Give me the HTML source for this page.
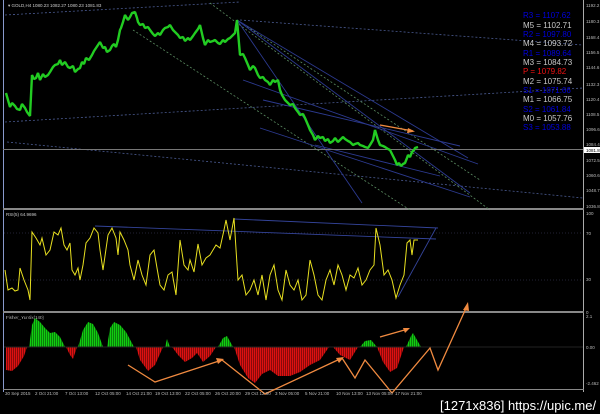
<!DOCTYPE html>
<html><head><meta charset="utf-8"><style>
html,body{margin:0;padding:0;background:#000;width:600px;height:414px;overflow:hidden}
svg{display:block}
text{font-family:"Liberation Sans",sans-serif}
</style></head><body>
<svg width="600" height="414" viewBox="0 0 600 414" xmlns="http://www.w3.org/2000/svg">
<defs>
<pattern id="st" width="2" height="10" patternUnits="userSpaceOnUse"><rect x="1.3" y="0" width="0.7" height="10" fill="#000" fill-opacity="0.55"/></pattern>
</defs>
<rect width="600" height="414" fill="#000"/>
<line x1="3.5" y1="0" x2="3.5" y2="392" stroke="#8899cc" stroke-width="1"/>
<line x1="583.5" y1="0" x2="583.5" y2="392" stroke="#aaa" stroke-width="1"/>
<rect x="3" y="208" width="581" height="2" fill="#888"/>
<rect x="3" y="311" width="581" height="2" fill="#888"/>
<line x1="3" y1="389.5" x2="584" y2="389.5" stroke="#888"/>
<text x="8" y="7" font-size="4.5" fill="#ccc">▾ GOLD,H4  1080.23 1082.27 1080.23 1081.83</text>
<g stroke-dasharray="2,2" stroke-width="0.8" fill="none">
<line x1="5" y1="15" x2="240" y2="2" stroke="#4a5a90"/>
<line x1="240" y1="20" x2="583" y2="45" stroke="#4a5a90"/>
<line x1="5" y1="122" x2="583" y2="88" stroke="#4a5a90"/>
<line x1="7" y1="142" x2="583" y2="198" stroke="#4a5a90"/>
<line x1="133" y1="30" x2="410" y2="210" stroke="#5a8a60"/>
<line x1="210" y1="3" x2="490" y2="210" stroke="#5a8a60"/>
<line x1="237" y1="20" x2="480" y2="180" stroke="#5a8a60"/>
</g>
<g stroke="#2c3a90" stroke-width="0.9" fill="none">
<line x1="237" y1="20" x2="468" y2="158"/>
<line x1="237" y1="20" x2="362" y2="203"/>
<line x1="243" y1="80" x2="478" y2="164"/>
<line x1="263" y1="100" x2="460" y2="146"/>
<line x1="260" y1="128" x2="470" y2="197"/>
<line x1="237" y1="20" x2="470" y2="193"/>
<line x1="315" y1="145" x2="440" y2="176"/>
</g>
<line x1="3" y1="149.5" x2="583" y2="149.5" stroke="#777"/>
<polyline fill="none" stroke="#22cc22" stroke-width="2.4" stroke-linejoin="bevel" points="6,93 8,100 10,107 12,103 15,106 17,109 20,110 22,104 25,108 27,112 30,116 32,75 34,79 36,78 38,73 40,80 43,74 45,77 48,75 50,72 53,67 55,65 58,64 60,60 62,65 65,62 68,67 70,68 73,66 75,72 78,69 80,68 82,62 84,64 86,58 89,60 92,55 94,51 96,48 98,45 100,42 103,48 105,47 107,52 110,50 112,46 114,44 116,47 118,40 120,30 121,28 123,22 125,15 128,20 130,17 132,13 135,12 137,18 138,22 140,25 143,24 145,28 148,27 150,30 153,34 155,36 158,33 160,35 163,30 165,28 168,27 170,25 173,30 175,32 178,35 180,38 183,37 185,41 188,38 190,40 193,36 195,33 198,29 200,25 203,38 205,45 208,40 210,42 213,41 215,40 218,43 220,44 223,40 225,42 228,39 230,38 233,35 235,33 237,20 240,55 243,54 245,58 248,65 250,70 253,66 255,68 258,75 260,78 263,77 265,80 268,82 270,85 273,80 275,82 278,80 280,90 282,95 285,100 288,103 290,105 293,104 295,108 298,112 300,115 303,114 305,118 308,125 310,130 313,135 315,140 318,136 320,138 323,137 325,141 328,139 330,143 333,141 335,138 338,142 340,140 343,137 345,139 348,141 350,142 353,145 355,144 358,143 360,145 363,146 365,147 368,148 370,145 373,140 375,130 378,140 380,145 383,146 385,147 388,149 390,150 393,156 395,160 397,165 399,163 401,166 403,164 405,163 407,158 408,155 410,157 412,152 414,150 415,148 418,147"/>
<line x1="380" y1="125" x2="413" y2="131" stroke="#f08a40" stroke-width="1.3"/>
<polygon points="415,131.5 408,128 407,133" fill="#f08a40"/>
<g font-size="8" font-family="Liberation Sans">
<text x="523" y="18" fill="#0000dd">R3 = 1107.62</text>
<text x="523" y="28" fill="#c8c8c8">M5 = 1102.71</text>
<text x="523" y="37" fill="#0000dd">R2 = 1097.80</text>
<text x="523" y="46" fill="#c8c8c8">M4 = 1093.72</text>
<text x="523" y="56" fill="#0000dd">R1 = 1089.64</text>
<text x="523" y="65" fill="#c8c8c8">M3 = 1084.73</text>
<text x="523" y="74" fill="#ee1111">P  = 1079.82</text>
<text x="523" y="84" fill="#c8c8c8">M2 = 1075.74</text>
<text x="523" y="93" fill="#0000dd">S1 = 1071.66</text>
<text x="523" y="102" fill="#c8c8c8">M1 = 1066.75</text>
<text x="523" y="112" fill="#0000dd">S2 = 1061.84</text>
<text x="523" y="121" fill="#c8c8c8">M0 = 1057.76</text>
<text x="523" y="130" fill="#0000dd">S3 = 1053.88</text>
</g>
<g font-size="4.5" fill="#bbb">
<text x="586" y="7">1192.2</text><text x="586" y="23">1180.3</text><text x="586" y="39">1168.4</text>
<text x="586" y="54">1156.5</text><text x="586" y="69">1144.6</text><text x="586" y="86">1132.3</text>
<text x="586" y="101">1120.4</text><text x="586" y="116">1108.5</text><text x="586" y="131">1096.6</text>
<text x="586" y="146">1084.4</text><text x="586" y="162">1072.5</text><text x="586" y="177">1060.6</text>
<text x="586" y="192">1048.7</text><text x="586" y="208">1036.8</text>
<text x="586" y="314">0</text><text x="586" y="318">2.1</text><text x="586" y="349">0.00</text><text x="586" y="385">-2.462</text>
<text x="586" y="215">100</text><text x="586" y="235">70</text><text x="586" y="281">30</text>
</g>
<rect x="584" y="147" width="16" height="6" fill="#fff"/>
<text x="586" y="152" font-size="4.5" fill="#000">1081.8</text>
<text x="6" y="216" font-size="4.5" fill="#ccc">RSI(5) 64.9696</text>
<line x1="4" y1="233" x2="583" y2="233" stroke="#223" stroke-dasharray="1,2"/>
<line x1="4" y1="280" x2="583" y2="280" stroke="#223" stroke-dasharray="1,2"/>
<g stroke="#34449a" stroke-width="0.9">
<line x1="95" y1="226" x2="436" y2="239"/>
<line x1="234" y1="219" x2="438" y2="228"/>
<line x1="398" y1="297" x2="436" y2="228"/>
</g>
<polyline fill="none" stroke="#e8e020" stroke-width="1" points="5,270 8,290 12,288 15,291 18,290 20,268 24,280 28,290 30,300 32,232 36,238 40,245 42,238 46,255 50,250 54,232 58,235 61,228 64,245 67,250 70,243 72,270 75,275 78,268 80,280 83,265 86,243 90,238 94,228 98,233 100,250 103,270 108,235 112,228 116,238 118,255 120,232 124,240 128,250 130,265 134,280 138,260 142,275 146,285 150,255 154,250 157,268 160,285 164,290 168,275 172,272 176,295 180,240 184,265 188,270 190,260 194,272 198,244 202,265 206,258 210,255 213,250 216,245 220,248 224,230 226,220 230,240 234,218 238,280 242,275 246,295 250,290 254,280 258,295 262,275 266,300 270,275 274,265 278,290 282,300 286,270 290,285 294,290 298,280 302,300 306,295 310,260 314,275 318,295 322,300 326,280 330,270 334,285 338,265 342,275 346,290 350,275 354,278 358,268 362,285 366,280 370,270 374,265 376,228 380,245 384,275 388,270 392,280 396,298 400,285 404,275 407,243 410,240 412,255 414,240 418,240"/>
<text x="6" y="319" font-size="4.5" fill="#ccc">Fisher_Yur4ik(140)</text>
<g stroke="none">
<path d="M29,347 L32,325 L35,318 L40,322 L45,328 L50,333 L55,332 L60,337 L65,347 Z" fill="#11cc11"/>
<path d="M78,347 L83,330 L88,322 L93,324 L98,333 L103,347 Z" fill="#11cc11"/>
<path d="M107,347 L110,328 L114,322 L120,325 L126,332 L134,347 Z" fill="#11cc11"/>
<path d="M165,347 L167,339 L170,347 Z" fill="#11cc11"/>
<path d="M218,347 L223,338 L227,336 L233,347 Z" fill="#11cc11"/>
<path d="M360,347 L365,341 L371,340 L377,347 Z" fill="#11cc11"/>
<path d="M406,347 L411,336 L413,333 L421,347 Z" fill="#11cc11"/>
<path d="M6,347 L6,370 L12,371 L18,366 L24,356 L27,347 Z" fill="#dd1111"/>
<path d="M66,347 L70,355 L73,359 L77,347 Z" fill="#dd1111"/>
<path d="M136,347 L140,360 L148,371 L155,365 L163,347 Z" fill="#dd1111"/>
<path d="M172,347 L178,355 L185,362 L192,358 L197,353 L203,362 L210,356 L216,347 Z" fill="#dd1111"/>
<path d="M234,347 L240,365 L248,378 L255,383 L262,374 L270,370 L278,376 L290,376 L300,372 L310,365 L320,360 L329,347 Z" fill="#dd1111"/>
<path d="M333,347 L340,355 L350,360 L358,347 Z" fill="#dd1111"/>
<path d="M377,347 L383,362 L390,372 L397,368 L404,347 Z" fill="#dd1111"/>
<rect x="4" y="314" width="420" height="75" fill="url(#st)"/>
</g>
<line x1="4" y1="347" x2="583" y2="347" stroke="#222"/>
<g fill="none" stroke="#f08a40" stroke-width="1.3">
<polyline points="128,365 155,382 222,360"/>
<polyline points="222,360 265,394 342,358"/>
<polyline points="342,358 355,378 365,360 392,393 430,348 438,370 467,306"/>
<line x1="380" y1="337" x2="408" y2="329"/>
</g>
<g fill="#f08a40">
<polygon points="224,359 216,358 218,364"/>
<polygon points="344,357 336,358 339,363"/>
<polygon points="468,302 463,310 469,311"/>
<polygon points="410,328 403,328 405,333"/>
</g>
<g font-size="4.5" fill="#bbb">
<text x="5" y="395">30 Sep 2015</text><text x="35" y="395">2 Oct 21:00</text><text x="65" y="395">7 Oct 13:00</text>
<text x="95" y="395">12 Oct 05:00</text><text x="126" y="395">14 Oct 21:00</text><text x="155" y="395">19 Oct 13:00</text>
<text x="185" y="395">22 Oct 05:00</text><text x="215" y="395">26 Oct 20:00</text><text x="245" y="395">29 Oct 12:00</text>
<text x="275" y="395">3 Nov 05:00</text><text x="305" y="395">5 Nov 21:00</text><text x="336" y="395">10 Nov 13:00</text>
<text x="366" y="395">13 Nov 05:00</text><text x="395" y="395">17 Nov 21:00</text>
</g>
<text x="440" y="410" font-size="13" fill="#fff" font-family="Liberation Sans Narrow, Liberation Sans, sans-serif">[1271x836] https://upic.me/</text>
</svg>
</body></html>
